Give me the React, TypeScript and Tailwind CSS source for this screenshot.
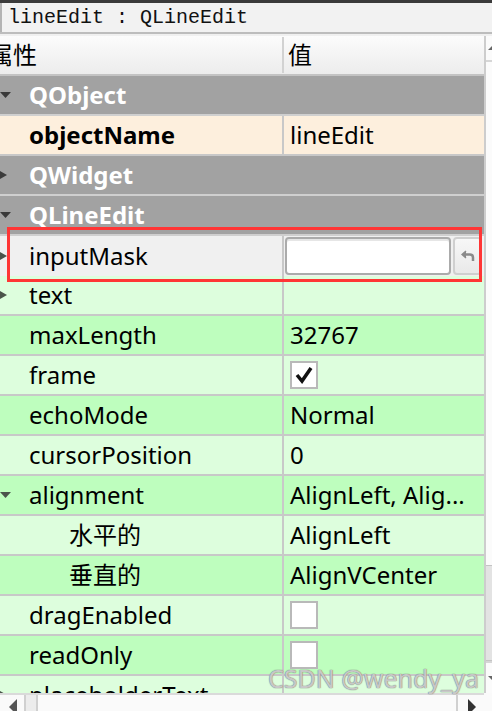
import React from 'react';

type Row =
  | { kind: 'group'; label: string; open: boolean }
  | {
      kind: 'prop';
      label: string;
      bg: string;
      arrow?: 'open' | 'closed';
      child?: boolean;
      bold?: boolean;
      value?: string;
      check?: boolean;
      editor?: boolean;
    };

const rows: Row[] = [
  { kind: 'group', label: 'QObject', open: true },
  { kind: 'prop', label: 'objectName', value: 'lineEdit', bg: 'bg-[#fdefdd]', bold: true },
  { kind: 'group', label: 'QWidget', open: false },
  { kind: 'group', label: 'QLineEdit', open: true },
  { kind: 'prop', label: 'inputMask', bg: 'bg-[#f0f0f0]', arrow: 'closed', editor: true },
  { kind: 'prop', label: 'text', bg: 'bg-[#ddfedd]', arrow: 'closed', value: '' },
  { kind: 'prop', label: 'maxLength', bg: 'bg-[#befebe]', value: '32767' },
  { kind: 'prop', label: 'frame', bg: 'bg-[#ddfedd]', check: true },
  { kind: 'prop', label: 'echoMode', bg: 'bg-[#befebe]', value: 'Normal' },
  { kind: 'prop', label: 'cursorPosition', bg: 'bg-[#ddfedd]', value: '0' },
  { kind: 'prop', label: 'alignment', bg: 'bg-[#befebe]', arrow: 'open', value: 'AlignLeft, Alig...' },
  { kind: 'prop', label: '水平的', bg: 'bg-[#ddfedd]', child: true, value: 'AlignLeft' },
  { kind: 'prop', label: '垂直的', bg: 'bg-[#befebe]', child: true, value: 'AlignVCenter' },
  { kind: 'prop', label: 'dragEnabled', bg: 'bg-[#ddfedd]', check: false },
  { kind: 'prop', label: 'readOnly', bg: 'bg-[#befebe]', check: false },
  { kind: 'prop', label: 'placeholderText', bg: 'bg-[#ddfedd]', arrow: 'closed', value: '' },
];

function Arrow({ open, color }: { open: boolean; color: string }) {
  // branch indicator, left part clipped by the scrolled view
  return (
    <svg width="12" height="14" viewBox="0 0 12 14" className="shrink-0">
      {open ? (
        <polygon points="0,4 11,4 5.5,10" fill={color} />
      ) : (
        <polygon points="-5,0 7,7 -5,14" fill={color} />
      )}
    </svg>
  );
}

function CheckBox({ on }: { on: boolean }) {
  return (
    <div className="w-[28px] h-[28px] border-2 border-[#b9b9b9] bg-white flex items-center justify-center">
      {on && (
        <svg width="20" height="20" viewBox="0 0 20 20">
          <path d="M3 10 L8 16 L17 3" fill="none" stroke="#111" strokeWidth="3.5" />
        </svg>
      )}
    </div>
  );
}

function MaskEditor() {
  return (
    <div className="flex items-center gap-[2px] h-full py-[1px] pl-[1px]">
      <div className="w-[166px] h-[38px] bg-white border-2 border-[#ababab] rounded-[4px] shadow-[inset_0_2px_0_#e6e6e6]" />
      <div className="w-[29px] h-[38px] border-2 border-[#cfcfcf] rounded-[4px] bg-gradient-to-b from-[#f7f7f7] to-[#e9e9e9] flex items-center justify-center">
        <svg width="14" height="14" viewBox="0 0 14 14">
          <path d="M5 2 L1 5.5 L5 9" fill="#8a8a8a" stroke="#8a8a8a" strokeWidth="1.5" />
          <path d="M2 5.5 H9 Q12 5.5 12 8.5 V12" fill="none" stroke="#8a8a8a" strokeWidth="2.5" />
        </svg>
      </div>
    </div>
  );
}

function PropRow({ row }: { row: Row }) {
  if (row.kind === 'group') {
    return (
      <div className="h-[40px] shrink-0 flex flex-col">
        <div className="flex-1 bg-[#a2a2a2] flex items-center">
          <div className="w-[29px] flex items-center">
            <Arrow open={row.open} color="#3a3a3a" />
          </div>
          <span className="text-white font-bold text-[24px]">{row.label}</span>
        </div>
        <div className="h-[2px] bg-[#cfcfcf]" />
      </div>
    );
  }
  return (
    <div className="h-[40px] shrink-0 flex flex-col">
      <div className={`flex-1 flex ${row.bg}`}>
        <div className="w-[282px] flex items-center">
          <div className={row.child ? 'w-[69px]' : 'w-[29px]'}>
            {row.arrow && <Arrow open={row.arrow === 'open'} color="#4a544a" />}
          </div>
          <span className={`text-[24px] text-black ${row.bold ? 'font-bold' : ''}`}>{row.label}</span>
        </div>
        <div className="w-[2px] bg-[#c8c8c8]" />
        <div className="flex-1 flex items-center pl-[6px]">
          {row.editor ? (
            <div className="-ml-[6px]"><MaskEditor /></div>
          ) : row.check !== undefined ? (
            <CheckBox on={row.check} />
          ) : (
            <span className="text-[24px] text-black whitespace-nowrap">{row.value}</span>
          )}
        </div>
      </div>
      <div className="h-[2px] bg-[#c8c8c8]" />
    </div>
  );
}

export default function App() {
  return (
    <div
      className="relative w-[492px] h-[711px] overflow-hidden bg-[#f0f0f0] flex flex-col"
      style={{ fontFamily: '"Noto Sans", "Noto Sans CJK SC", sans-serif' }}
    >
      <div className="h-[3px] bg-[#3b3b3b] shrink-0" />

      {/* object / class caption */}
      <div className="h-[29px] shrink-0 bg-[#f2f2f2] border-l-2 border-[#b4b4b4] flex items-center pl-[6px]">
        <span className="text-[20px] text-[#111] leading-none" style={{ fontFamily: '"Liberation Mono", monospace' }}>
          lineEdit : QLineEdit
        </span>
      </div>
      <div className="h-[2px] bg-[#bdbdbd] shrink-0" />
      <div className="h-[2px] shrink-0" />

      <div className="flex-1 flex min-h-0">
        <div className="w-[484px] flex flex-col min-h-0">
          {/* header */}
          <div className="h-[40px] shrink-0 flex flex-col">
            <div className="flex-1 flex bg-gradient-to-b from-[#fcfcfc] to-[#ececec]">
              <div className="w-[282px] flex items-center overflow-hidden">
                <span className="text-[24px] text-black -ml-[11px]">属性</span>
              </div>
              <div className="w-[2px] my-[1px] bg-[#d2d2d2]" />
              <div className="flex-1 flex items-center pl-[4px]">
                <span className="text-[24px] text-black">值</span>
              </div>
            </div>
            <div className="h-[2px] bg-[#c3c3c3]" />
          </div>

          {/* property rows */}
          <div className="flex-1 min-h-0 overflow-hidden flex flex-col">
            {rows.map((r, i) => (
              <PropRow key={i} row={r} />
            ))}
          </div>

          {/* horizontal scrollbar */}
          <div className="h-[18px] shrink-0 bg-[#fafafa] border-t-2 border-[#dadada] flex">
            <div className="w-[26px] border-r-2 border-[#d0d0d0] flex items-end pl-[8px]">
              <svg width="10" height="14" viewBox="0 0 10 14">
                <polygon points="9,2 1,10 9,18" fill="#555" />
              </svg>
            </div>
            <div className="w-[12px] bg-[#ececec] border-r-2 border-[#d0d0d0]" />
            <div className="flex-1" />
            <div className="w-[28px] border-l-2 border-[#d0d0d0] flex items-end pl-[9px]">
              <svg width="10" height="14" viewBox="0 0 10 14">
                <polygon points="1,2 9,10 1,18" fill="#333" />
              </svg>
            </div>
          </div>
        </div>

        {/* vertical scrollbar */}
        <div className="flex-1 flex flex-col">
          <div className="flex-1 flex flex-col border-l-2 border-[#cdcdcd] bg-[#fbfbfb]">
            <div className="h-[26px] shrink-0 border-b-2 border-[#d6d6d6] flex items-center justify-end">
              <svg width="4" height="6" viewBox="0 0 4 6">
                <polygon points="0,5 5,0 5,5" fill="#666" />
              </svg>
            </div>
            <div className="h-[503px] shrink-0" />
            <div className="h-[96px] shrink-0 bg-[#e3e3e3] border-y border-[#c4c4c4]" />
            <div className="flex-1 border-t-2 border-[#d6d6d6] flex items-center justify-end">
              <svg width="4" height="6" viewBox="0 0 4 6">
                <polygon points="0,1 5,1 5,6" fill="#666" />
              </svg>
            </div>
          </div>
          <div className="h-[18px] shrink-0 bg-[#fafafa]" />
        </div>
      </div>

      {/* highlight box around the inputMask row */}
      <div className="absolute left-[7px] top-[227px] w-[475px] h-[55px] border-[3px] border-[#ff3535] pointer-events-none" />

      <div
        className="absolute left-[268px] top-[666px] text-[25px] leading-none text-white/60 whitespace-nowrap pointer-events-none [text-shadow:0_0_1px_#777,0_0_1px_#777]"
        style={{ fontFamily: '"Noto Sans", sans-serif' }}
      >
        CSDN @wendy_ya
      </div>
    </div>
  );
}
